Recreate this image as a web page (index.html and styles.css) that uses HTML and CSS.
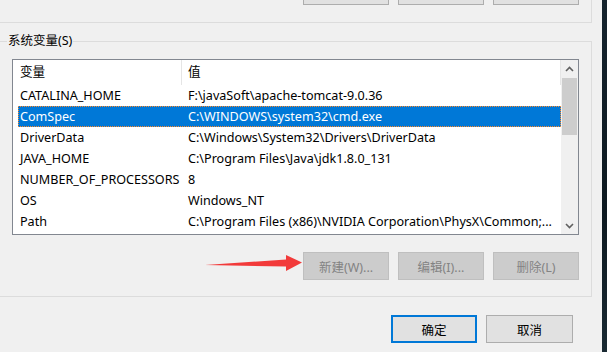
FILE: index.html
```html
<!DOCTYPE html>
<html lang="zh-CN">
<head>
    <meta charset="UTF-8">
    <title>环境变量</title>
    <link rel="stylesheet" href="styles.css">
</head>
<body>
<div class="screen">
    <div class="dialog">
        <div class="user-group">
            <div class="btn-row top-btns">
                <button class="btn"></button>
                <button class="btn"></button>
                <button class="btn"></button>
            </div>
        </div>

        <div class="sys-group">
            <div class="group-label">系统变量(S)</div>
            <div class="listview">
                <div class="list-main">
                    <div class="list-head">
                        <div class="head-name">变量</div>
                        <div class="head-value">值</div>
                    </div>
                    <div class="row"><span class="name">CATALINA_HOME</span><span class="value">F:\javaSoft\apache-tomcat-9.0.36</span></div>
                    <div class="row selected"><span class="name">ComSpec</span><span class="value">C:\WINDOWS\system32\cmd.exe</span></div>
                    <div class="row"><span class="name">DriverData</span><span class="value">C:\Windows\System32\Drivers\DriverData</span></div>
                    <div class="row"><span class="name">JAVA_HOME</span><span class="value">C:\Program Files\Java\jdk1.8.0_131</span></div>
                    <div class="row"><span class="name">NUMBER_OF_PROCESSORS</span><span class="value">8</span></div>
                    <div class="row"><span class="name">OS</span><span class="value">Windows_NT</span></div>
                    <div class="row"><span class="name">Path</span><span class="value">C:\Program Files (x86)\NVIDIA Corporation\PhysX\Common;...</span></div>
                </div>
                <div class="scrollbar">
                    <div class="sb-arrow">
                        <svg width="9" height="6" viewBox="0 0 9 6"><path d="M1 5 L4.5 1.5 L8 5" fill="none" stroke="#606060" stroke-width="1.6"/></svg>
                    </div>
                    <div class="sb-track"><div class="sb-thumb"></div></div>
                    <div class="sb-arrow">
                        <svg width="9" height="6" viewBox="0 0 9 6"><path d="M1 1 L4.5 4.5 L8 1" fill="none" stroke="#606060" stroke-width="1.6"/></svg>
                    </div>
                </div>
            </div>
            <div class="btn-row group-btns">
                <button class="btn disabled">新建(W)...</button>
                <button class="btn disabled">编辑(I)...</button>
                <button class="btn disabled">删除(L)</button>
            </div>
        </div>

        <div class="btn-row dialog-btns">
            <button class="btn default">确定</button>
            <button class="btn wide">取消</button>
        </div>
    </div>
    <div class="desktop-edge"></div>

    <!-- 红色箭头标注 -->
    <svg class="pointer-arrow" width="110" height="30" viewBox="0 0 110 30">
        <polygon points="5,15 86,9.5 86,5 102,12.5 86,21 86,16.5" fill="#f23a3a"/>
    </svg>
</div>
</body>
</html>
```

FILE: styles.css
```css
* {
    margin: 0;
    padding: 0;
    box-sizing: border-box;
}

body {
    background-color: #f0f0f0;
    font-family: 'Noto Sans', 'Noto Sans CJK SC', sans-serif;
    font-size: 12px;
    color: #000000;
    overflow: hidden;
}

.screen {
    position: relative;
    display: flex;
    width: 607px;
    height: 352px;
    overflow: hidden;
}

.dialog {
    width: 602px;
    background-color: #f0f0f0;
}

.desktop-edge {
    flex: 1;
    background: linear-gradient(180deg, #16242e, #0d1920 60%, #1a2a33);
}

/* 按钮 */
.btn-row {
    display: flex;
    justify-content: flex-end;
    gap: 9px;
}

.btn {
    width: 86px;
    height: 28px;
    border: 1px solid #adadad;
    background-color: #e1e1e1;
    font-family: inherit;
    font-size: 12.5px;
    color: #000000;
}

.btn.disabled {
    background-color: #cccccc;
    border-color: #bfbfbf;
    color: #838383;
}

.btn.default {
    border: 2px solid #0078d7;
}

/* 用户变量（上方，只露出底边） */
.user-group {
    width: 592px;
    height: 23px;
    border-right: 1px solid #dcdcdc;
    border-bottom: 1px solid #dcdcdc;
}

.top-btns {
    padding-right: 12px;
}

.top-btns .btn {
    height: 25px;
    margin-top: -20px;
}

/* 系统变量 */
.sys-group {
    width: 592px;
    height: 256px;
    margin-top: 18px;
    padding: 0 12px 0 12px;
    border: 1px solid #dcdcdc;
    border-left: none;
}

.group-label {
    width: fit-content;
    height: 16px;
    line-height: 16px;
    margin: -9px 0 0 -5px;
    padding: 0 1px 0 1px;
    font-size: 12.5px;
    background-color: #f0f0f0;
}

.listview {
    display: flex;
    height: 176px;
    margin-top: 10px;
    border: 1px solid #828790;
    background-color: #ffffff;
    font-size: 12.6px;
}

.list-main {
    width: 548px;
}

.list-head {
    display: flex;
    height: 25px;
    line-height: 24px;
}

.head-name {
    width: 169px;
    padding-left: 7px;
    border-right: 1px solid #e5e5e5;
}

.head-value {
    flex: 1;
    padding-left: 6px;
    border-right: 1px solid #e5e5e5;
}

.row {
    display: flex;
    height: 21px;
    line-height: 21px;
    margin-left: 5px;
    padding-left: 2px;
    white-space: nowrap;
}

.row .name {
    width: 168px;
}

.row.selected {
    background-color: #0078d7;
    color: #ffffff;
    outline: 1px dotted #ff8a2a;
    outline-offset: -1px;
}

.scrollbar {
    display: flex;
    flex-direction: column;
    width: 17px;
    background-color: #f0f0f0;
}

.sb-arrow {
    display: flex;
    align-items: center;
    justify-content: center;
    height: 17px;
}

.sb-track {
    flex: 1;
    padding: 1px 1px 0 1px;
}

.sb-thumb {
    height: 57px;
    background-color: #cdcdcd;
}

.group-btns {
    margin-top: 17px;
}

/* 确定 / 取消 */
.dialog-btns {
    margin-top: 18px;
    padding-right: 29px;
    gap: 9px;
}

.dialog-btns .btn.wide {
    width: 87px;
}

.pointer-arrow {
    position: absolute;
    left: 200px;
    top: 250px;
}
```
